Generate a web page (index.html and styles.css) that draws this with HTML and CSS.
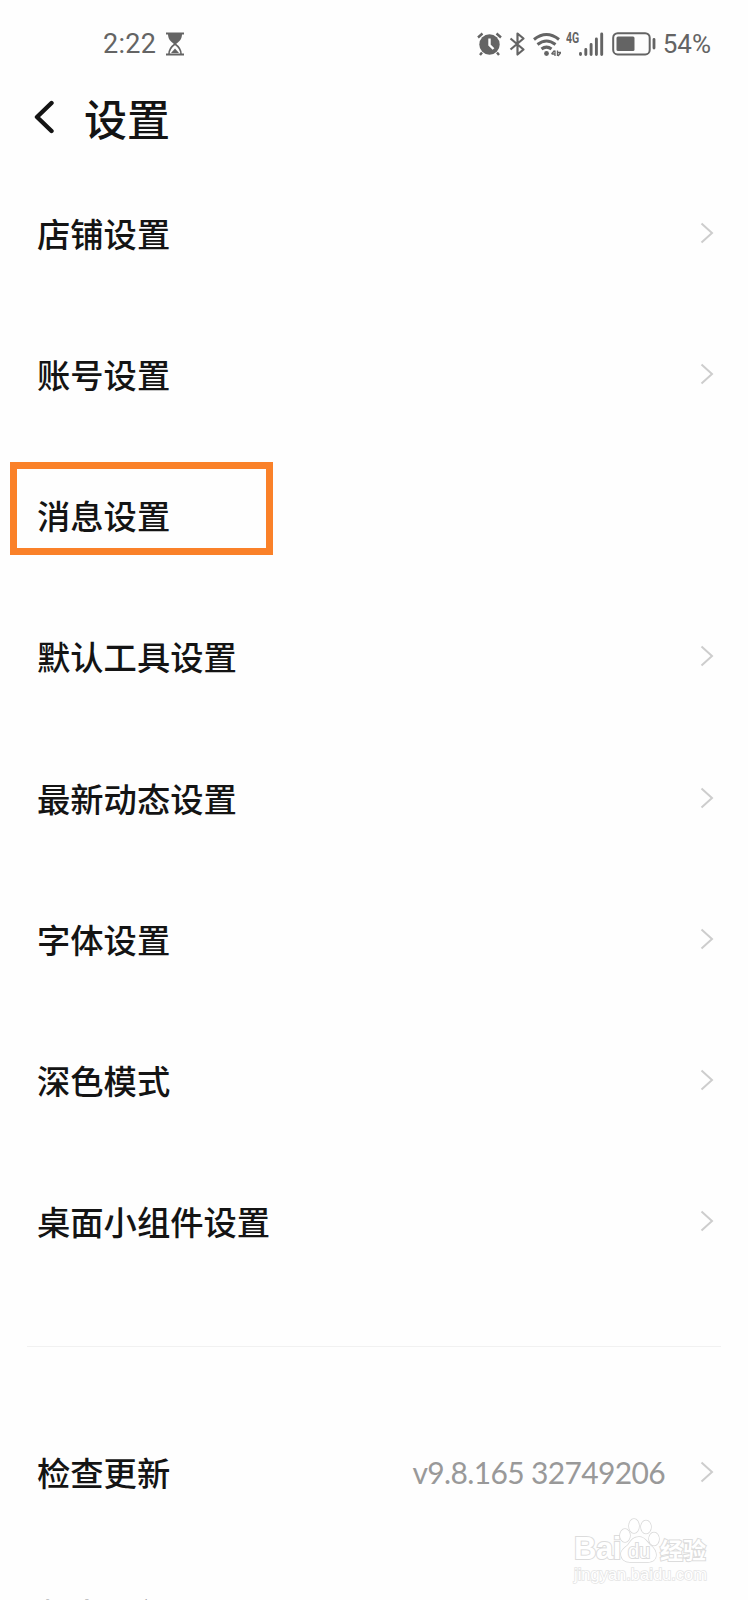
FILE: index.html
```html
<!DOCTYPE html>
<html lang="zh-CN">
<head>
    <meta charset="UTF-8">
    <title>设置</title>
    <link rel="stylesheet" href="styles.css">
</head>
<body>
    <div class="statusbar">
        <div class="status-left">
            <span class="time">2:22</span>
            <svg class="hourglass" width="18" height="24" viewBox="0 0 18 24">
                <path d="M0 1.500h18M0 22.500h18" stroke="#646464" stroke-width="2"/>
                <path d="M2 2h14c0 5-2.500 7.500-6 10h-2c-3.500-2.500-6-5-6-10z" fill="#646464"/>
                <path d="M3 22c0-5 2.500-7.500 6-10 3.500 2.500 6 5 6 10" fill="none" stroke="#646464" stroke-width="1.600"/>
                <path d="M5 21l4-4.500 4 4.500z" fill="#646464"/>
            </svg>
        </div>
        <div class="status-right">
            <svg class="alarm" width="26" height="25" viewBox="0 0 26 25">
                <circle cx="12.500" cy="12.500" r="10.200" fill="#646464"/>
                <path d="M1 5.500L5.500 1.500M19.500 1.500L24 5.500M5 20.500l-2 2.500M20 20.500l2 2.500" stroke="#646464" stroke-width="2.400"/>
                <path d="M12.500 6.500v6.500l4 4" fill="none" stroke="#fff" stroke-width="2.400"/>
            </svg>
            <svg class="bluetooth" width="17" height="26" viewBox="0 0 17 26">
                <path d="M1.500 7.500l13 11-6 5V2.500l6 5-13 11" fill="none" stroke="#646464" stroke-width="2.200" stroke-linejoin="round"/>
            </svg>
            <svg class="wifi" width="28" height="25" viewBox="0 0 28 25">
                <path d="M1 7.500Q13.500 -2.500 26 7.500M4.500 12.500q9-7 18 0M8.500 17q5-3.800 10 0" fill="none" stroke="#646464" stroke-width="3"/>
                <circle cx="13.500" cy="21.500" r="2.400" fill="#646464"/>
                <path d="M22 18.500v5.500M22 22h-3.500M24.500 24v-5.500M24.500 20.500H28M21.500 18.500l-3 3.500M25 24l3-3.500" fill="none" stroke="#646464" stroke-width="1.300"/>
            </svg>
            <span class="network">4G</span>
            <svg class="signal" width="25" height="24" viewBox="0 0 25 24">
                <path d="M1.500 21.500v1M6.800 17.500v5M12.100 12.500v10M17.400 7v15.500M22.700 2v20.500" stroke="#646464" stroke-width="2.900" stroke-linecap="round"/>
            </svg>
            <svg class="battery" width="44" height="24" viewBox="0 0 44 24">
                <rect x="1.200" y="1.200" width="36.500" height="21.200" rx="4.500" fill="none" stroke="#646464" stroke-width="2"/>
                <rect x="4.500" y="4.500" width="18" height="14.500" rx="1.500" fill="#646464"/>
                <path d="M42 7.500v8.500" stroke="#646464" stroke-width="2.800" stroke-linecap="round"/>
            </svg>
            <span class="percent">54%</span>
        </div>
    </div>

    <div class="header">
        <svg class="back" width="22" height="34" viewBox="0 0 22 34">
            <path d="M18.500 3L4 17 18.500 31" fill="none" stroke="#141414" stroke-width="4.400" stroke-linecap="round" stroke-linejoin="round"/>
        </svg>
        <h1>设置</h1>
    </div>

    <ul class="list">
        <li><span>店铺设置</span><svg class="arrow" viewBox="0 0 14 22"><path d="M1.500 1.500L12 11 1.500 20.500"/></svg></li>
        <li><span>账号设置</span><svg class="arrow" viewBox="0 0 14 22"><path d="M1.500 1.500L12 11 1.500 20.500"/></svg></li>
        <li class="marked"><span>消息设置</span></li>
        <li><span>默认工具设置</span><svg class="arrow" viewBox="0 0 14 22"><path d="M1.500 1.500L12 11 1.500 20.500"/></svg></li>
        <li><span>最新动态设置</span><svg class="arrow" viewBox="0 0 14 22"><path d="M1.500 1.500L12 11 1.500 20.500"/></svg></li>
        <li><span>字体设置</span><svg class="arrow" viewBox="0 0 14 22"><path d="M1.500 1.500L12 11 1.500 20.500"/></svg></li>
        <li><span>深色模式</span><svg class="arrow" viewBox="0 0 14 22"><path d="M1.500 1.500L12 11 1.500 20.500"/></svg></li>
        <li><span>桌面小组件设置</span><svg class="arrow" viewBox="0 0 14 22"><path d="M1.500 1.500L12 11 1.500 20.500"/></svg></li>
    </ul>

    <div class="divider"></div>

    <ul class="list">
        <li><span>检查更新</span><span class="version">v9.8.165 32749206</span><svg class="arrow" viewBox="0 0 14 22"><path d="M1.500 1.500L12 11 1.500 20.500"/></svg></li>
        <li class="last"><span>版本更新记录</span></li>
    </ul>

    <div class="watermark">
        <div class="brand">
            <span class="bai">Bai</span>
            <div class="paw">
                <svg width="42" height="46" viewBox="0 0 42 46">
                    <g fill="#fff" stroke="#d8d8d8" stroke-width="1.500">
                        <ellipse cx="6" cy="17.500" rx="5" ry="6.500"/>
                        <ellipse cx="15" cy="8" rx="5" ry="7"/>
                        <ellipse cx="27" cy="9" rx="5" ry="6.500"/>
                        <ellipse cx="35" cy="21" rx="5" ry="6.500"/>
                        <path d="M20 19c6 0 8 5 11 8 4 3 6 6 6 10 0 5-4 7-8 7H11c-5 0-9-3-9-8 0-4 4-6 7-9 3-4 5-8 11-8z"/>
                    </g>
                </svg>
                <span class="du">du</span>
            </div>
            <span class="jingyan">经验</span>
        </div>
        <div class="site">jingyan.baidu.com</div>
    </div>
</body>
</html>
```
FILE: styles.css
```css
* {
    box-sizing: border-box;
}
body {
    margin: 0;
    height: 1600px;
    overflow: hidden;
    position: relative;
    background-color: #fefefe;
    color: #141414;
    font-family: "Noto Sans CJK SC", sans-serif;
}
.statusbar {
    display: flex;
    justify-content: space-between;
    height: 88px;
    padding: 0 37px 0 103px;
    color: #646464;
    font-family: Roboto, sans-serif;
}
.status-left, .status-right {
    display: flex;
    align-items: center;
}
.time {
    font-size: 27px;
    letter-spacing: 0.3px;
    margin-right: 10px;
}
.bluetooth {
    margin-left: 6px;
}
.wifi {
    margin-left: 7px;
}
.network {
    width: 13px;
    font-size: 15px;
    font-weight: 700;
    line-height: 16px;
    margin: -13px 0 0 5px;
    transform: scaleX(0.7);
    transform-origin: left;
}
.signal {
    margin-right: 8px;
}
.percent {
    font-size: 26px;
    margin-left: 7px;
}
.header {
    display: flex;
    align-items: center;
    height: 57px;
    padding-left: 33px;
}
h1 {
    margin: 0 0 0 29px;
    font-size: 43px;
    font-weight: 500;
    line-height: 56px;
}
.list {
    list-style-type: none;
    margin: 0;
    padding: 0;
}
.header + .list {
    padding-top: 17px;
}
li {
    display: flex;
    align-items: center;
    justify-content: space-between;
    height: 141.250px;
    padding: 0 34px 0 37px;
    font-size: 33.300px;
    font-weight: 500;
}
li span:first-child {
    margin-top: -1px;
}
.arrow {
    width: 14px;
    height: 22px;
    fill: none;
    stroke: #cdcdcd;
    stroke-width: 2;
}
.marked {
    position: relative;
}
.marked::after {
    content: "";
    position: absolute;
    box-sizing: border-box;
    left: 10px;
    top: 17px;
    width: 263px;
    height: 93px;
    border: 7px solid #fa8129;
}
.last {
    height: 143px;
}
.divider {
    height: 1px;
    margin: 54px 27px;
    background-color: #f1f1f1;
}
.version {
    margin: 0 35px 0 auto;
    color: #999;
    font-family: Lato, sans-serif;
    font-size: 30px;
    font-weight: 400;
    letter-spacing: -0.650px;
}
.watermark {
    position: absolute;
    left: 574px;
    top: 1518px;
    width: 136px;
    color: #fff;
    -webkit-text-stroke: 2px #dcdcdc;
    paint-order: stroke fill;
    font-family: "Liberation Sans", sans-serif;
}
.brand {
    display: flex;
    align-items: flex-end;
    height: 46px;
}
.bai {
    font-size: 31px;
    font-weight: bold;
    line-height: 31px;
    width: 45px;
    letter-spacing: -0.500px;
}
.paw {
    position: relative;
    width: 41px;
    height: 46px;
}
.du {
    position: absolute;
    left: 9px;
    top: 23px;
    font-size: 20px;
    line-height: 20px;
}
.jingyan {
    font-family: "Noto Sans CJK SC", sans-serif;
    font-size: 23px;
    font-weight: bold;
    line-height: 25px;
    margin-bottom: 2px;
}
.site {
    font-size: 16.500px;
    line-height: 20px;
    -webkit-text-stroke: 1.500px #e4e4e4;
}
```
